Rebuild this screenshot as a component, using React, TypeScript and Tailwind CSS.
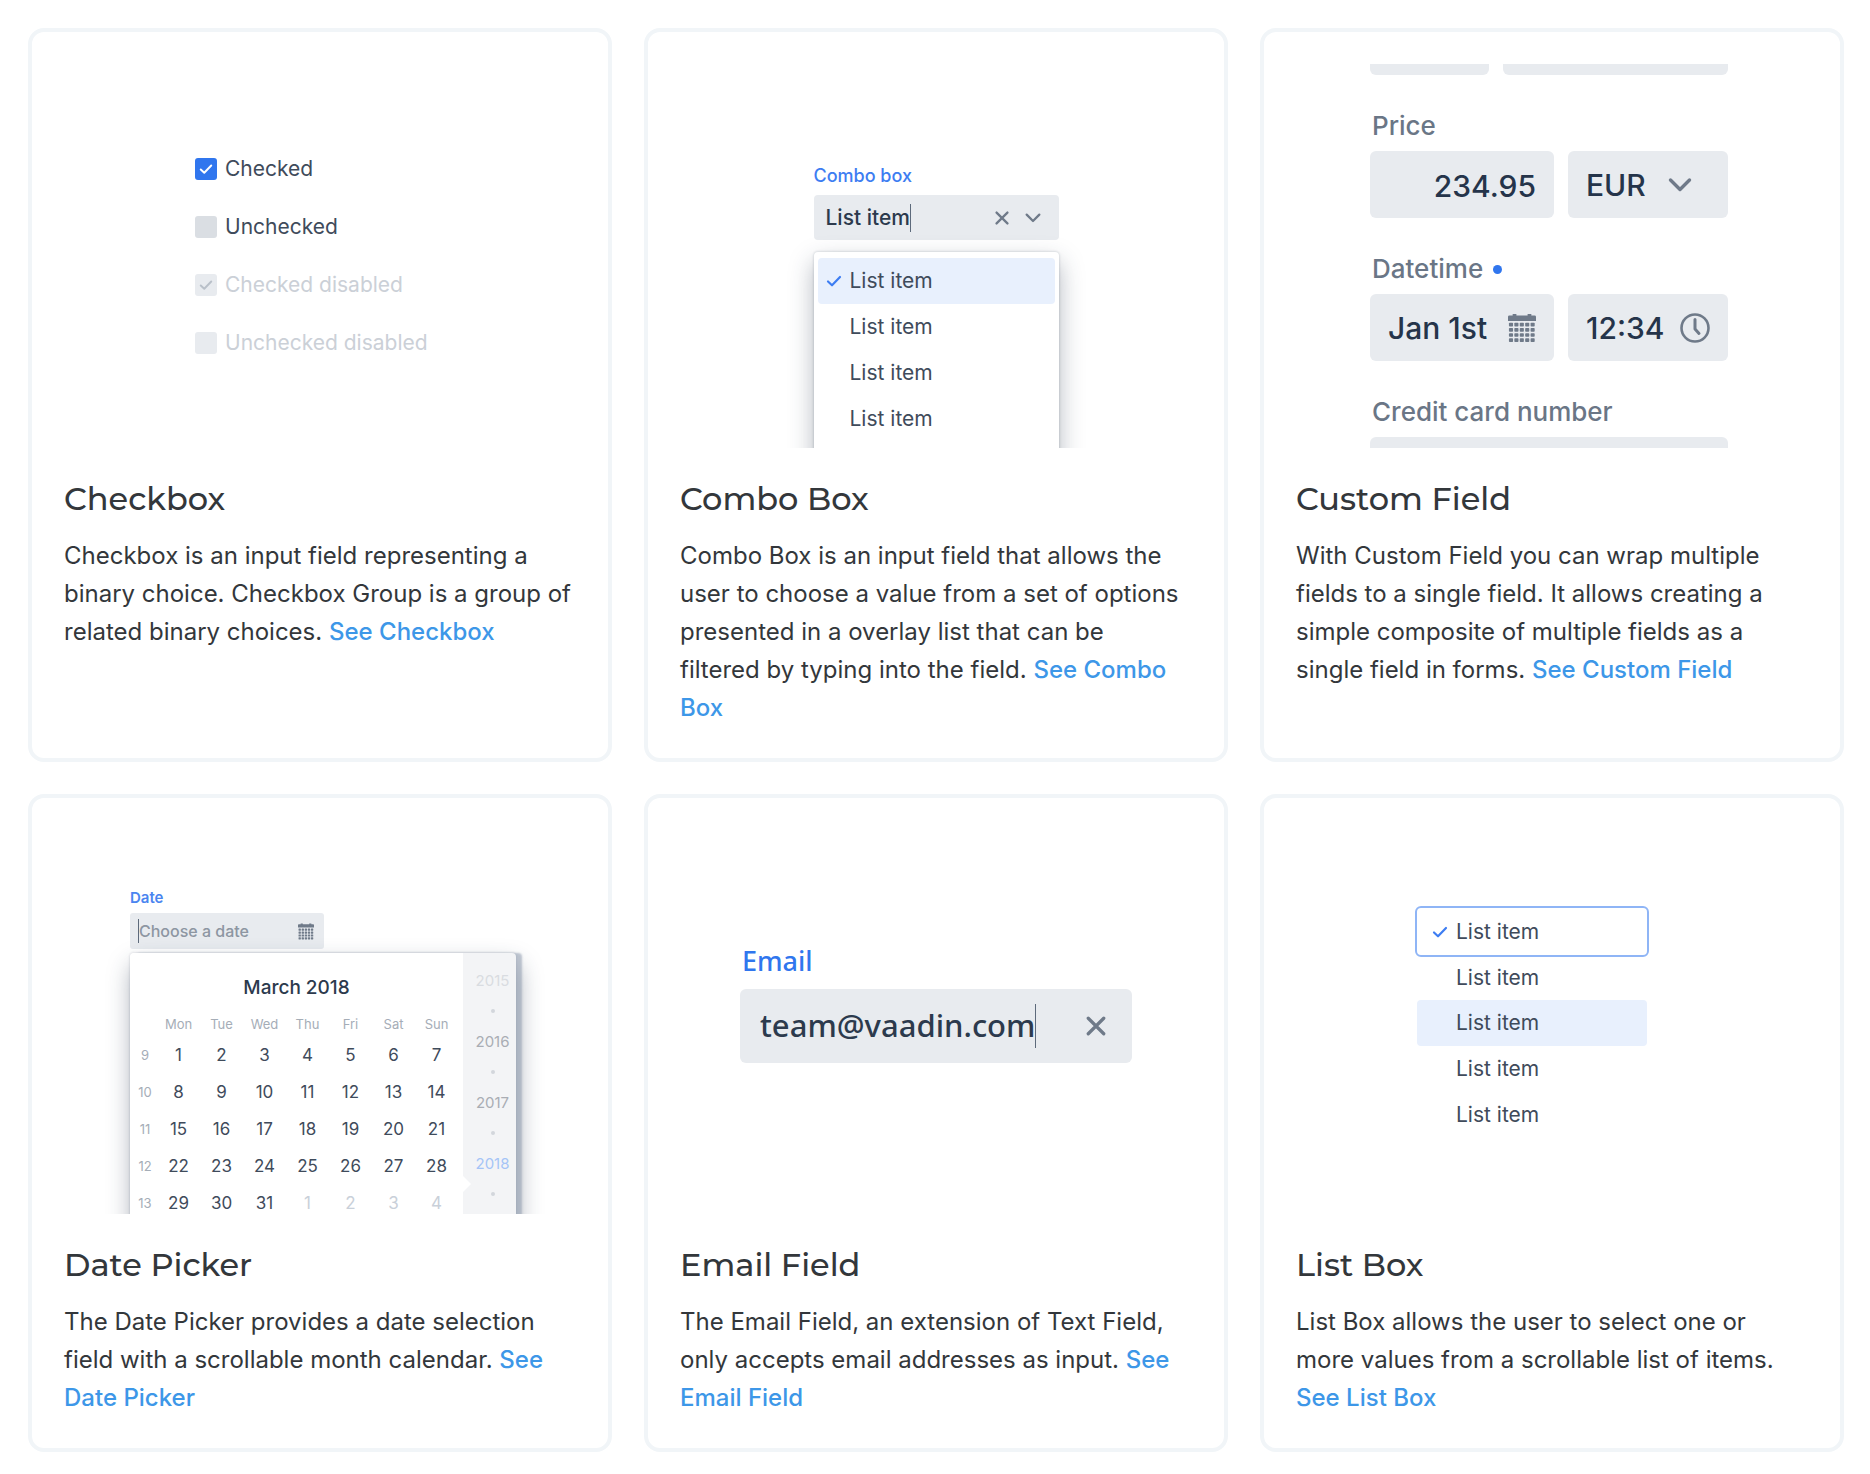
import React from 'react';

interface IconProps {
  className?: string;
}

const CheckIcon: React.FC<IconProps> = ({ className }) => (
  <svg viewBox="0 0 16 16" fill="none" stroke="currentColor" strokeWidth="2.2" strokeLinecap="round" strokeLinejoin="round" className={className} aria-hidden="true">
    <path d="M2 8.500 6 12.300 14 4" />
  </svg>
);

const CrossIcon: React.FC<IconProps> = ({ className }) => (
  <svg viewBox="0 0 16 16" fill="none" stroke="currentColor" strokeWidth="2.6" strokeLinecap="round" className={className} aria-hidden="true">
    <path d="M1.800 1.800 14.200 14.200M14.200 1.800 1.800 14.200" />
  </svg>
);

const ChevronIcon: React.FC<IconProps> = ({ className }) => (
  <svg viewBox="0 0 24 16" fill="none" stroke="currentColor" strokeWidth="3.4" strokeLinecap="round" strokeLinejoin="round" className={className} aria-hidden="true">
    <path d="M2.500 3 12 12.500 21.500 3" />
  </svg>
);

const ClockIcon: React.FC<IconProps> = ({ className }) => (
  <svg viewBox="0 0 30 30" fill="none" stroke="currentColor" strokeLinecap="round" strokeLinejoin="round" className={className} aria-hidden="true">
    <circle cx="15" cy="15" r="13.5" strokeWidth="2.6" />
    <path d="M15 6.500v9.500l4 4.500" strokeWidth="3" />
  </svg>
);

const CalendarIcon: React.FC<IconProps> = ({ className }) => (
  <svg viewBox="0 0 30 30" fill="currentColor" className={className} aria-hidden="true">
    <path d="M1.500 1.500H5V0h4v1.500h12V0h4v1.500h3.500a1.500 1.500 0 0 1 1.500 1.500V7.500H0V3a1.500 1.500 0 0 1 1.500-1.500Z" />
    {[9.5, 15, 20.5, 26].map((y) =>
      [1, 6.8, 12.6, 18.4, 24.2].map((x) => <rect key={`${x}-${y}`} x={x} y={y} width="4.4" height="4" rx="0.8" />)
    )}
  </svg>
);

const checkboxes = [
  { id: 'cb-checked', label: 'Checked', checked: true, disabled: false },
  { id: 'cb-unchecked', label: 'Unchecked', checked: false, disabled: false },
  { id: 'cb-checked-disabled', label: 'Checked disabled', checked: true, disabled: true },
  { id: 'cb-unchecked-disabled', label: 'Unchecked disabled', checked: false, disabled: true },
];

const CheckboxPreview = () => (
  <div className="flex h-full w-[250px] flex-col justify-center gap-9">
    {checkboxes.map((c) => (
      <div key={c.id} className="flex h-[22px] items-center gap-2">
        <span className="relative block size-[22px]">
          <input
            id={c.id}
            type="checkbox"
            defaultChecked={c.checked}
            disabled={c.disabled}
            className="peer block size-[22px] appearance-none rounded-[3px] bg-[#dadee3] checked:bg-[#3076ee] disabled:bg-[#e8ebef]"
          />
          <CheckIcon className="pointer-events-none absolute inset-1 hidden size-3.5 text-white peer-checked:block peer-disabled:text-[#b9c0c9]" />
        </span>
        <label htmlFor={c.id} className={c.disabled ? 'text-[21px] text-[#cbd0d7]' : 'text-[21px] text-[#3f4b5b]'}>
          {c.label}
        </label>
      </div>
    ))}
  </div>
);

const ComboBoxPreview = () => (
  <div className="w-[245px] pt-24">
    <label htmlFor="combo" className="block h-[35px] pt-1 text-lg leading-6 font-medium text-[#3d7df2]">
      Combo box
    </label>
    <div className="flex h-[45px] items-center rounded bg-[#e8ebef] pr-[18px] pl-3">
      <input id="combo" defaultValue="List item" className="field-sizing-content bg-transparent text-[21px] font-medium text-[#2c3a4d] outline-none" />
      <span className="h-7 w-px bg-[#5d6a7b]" />
      <button aria-label="Clear" className="ml-auto text-[#6f7a89]">
        <CrossIcon className="size-3.5" />
      </button>
      <button aria-label="Open list" className="ml-4 text-[#6f7a89]">
        <ChevronIcon className="h-3 w-4" />
      </button>
    </div>
    <ul className="mt-3 h-[300px] rounded bg-white p-1 pt-1.5 shadow-[0_0_2px_1px_rgba(36,51,75,0.12),0_10px_24px_rgba(36,51,75,0.35)]">
      {[0, 1, 2, 3].map((i) => (
        <li key={i} className={i === 0 ? 'flex h-[46px] items-center rounded bg-[#e8f0fd] px-2' : 'flex h-[46px] items-center px-2'}>
          <span className="w-6">{i === 0 && <CheckIcon className="size-4 text-[#3d7df2]" />}</span>
          <span className="text-[21px] text-[#3f4b5b]">List item</span>
        </li>
      ))}
    </ul>
  </div>
);

const CustomFieldPreview = () => (
  <div className="flex w-[364px] flex-col gap-[35px] pr-1.5">
    <div className="flex gap-3.5">
      <div className="h-[11px] w-[119px] rounded-b-md bg-[#e8ebef]" />
      <div className="h-[11px] flex-1 rounded-b-md bg-[#e8ebef]" />
    </div>
    <div className="flex flex-col gap-[9px]">
      <label htmlFor="price" className="pl-0.5 text-[26px] leading-8 font-medium text-[#6a7686]">Price</label>
      <div className="flex gap-3.5 text-[30px] font-medium text-[#25344a]">
        <input id="price" defaultValue="234.95" className="h-[67px] w-[184px] rounded-md bg-[#e8ebef] px-[18px] pt-0.5 text-right outline-none" />
        <div className="relative flex-1">
          <select aria-label="Currency" className="h-[67px] w-full appearance-none rounded-md bg-[#e8ebef] px-[18px] pt-0.5 outline-none">
            <option>EUR</option>
          </select>
          <ChevronIcon className="pointer-events-none absolute top-[26px] right-9 h-4 w-6 text-[#6f7a89]" />
        </div>
      </div>
    </div>
    <div className="flex flex-col gap-[9px]">
      <label htmlFor="date-part" className="flex items-center gap-2.5 pl-0.5 text-[26px] leading-8 font-medium text-[#6a7686]">
        Datetime
        <span className="size-[9px] rounded-full bg-[#3076ee]" />
      </label>
      <div className="flex gap-3.5 text-[30px] font-medium text-[#25344a]">
        <div className="flex h-[67px] w-[184px] items-center rounded-md bg-[#e8ebef] px-[18px]">
          <input id="date-part" defaultValue="Jan 1st" className="min-w-0 flex-1 bg-transparent pt-0.5 outline-none" />
          <CalendarIcon className="h-[30px] w-7 text-[#6f7a89]" />
        </div>
        <div className="flex h-[67px] min-w-0 flex-1 items-center rounded-md bg-[#e8ebef] px-[18px]">
          <input aria-label="Time" defaultValue="12:34" className="min-w-0 flex-1 bg-transparent pt-0.5 outline-none" />
          <ClockIcon className="size-[30px] shrink-0 text-[#6f7a89]" />
        </div>
      </div>
    </div>
    <div className="flex flex-col gap-[9px]">
      <span className="pl-0.5 text-[26px] leading-8 font-medium text-[#6a7686]">Credit card number</span>
      <div className="h-[11px] rounded-t-md bg-[#e8ebef]" />
    </div>
  </div>
);

const weekdays = ['Mon', 'Tue', 'Wed', 'Thu', 'Fri', 'Sat', 'Sun'];
const weeks = [
  { no: 9, days: [1, 2, 3, 4, 5, 6, 7] },
  { no: 10, days: [8, 9, 10, 11, 12, 13, 14] },
  { no: 11, days: [15, 16, 17, 18, 19, 20, 21] },
  { no: 12, days: [22, 23, 24, 25, 26, 27, 28] },
  { no: 13, days: [29, 30, 31, 1, 2, 3, 4] },
];
const years = [
  { year: 2015, color: 'text-[#d9dce1]' },
  { year: 2016, color: 'text-[#a9adb4]' },
  { year: 2017, color: 'text-[#a9adb4]' },
  { year: 2018, color: 'text-[#a5c4f7]' },
];

const DatePickerPreview = () => (
  <div className="w-[380px] pt-14">
    <label htmlFor="date" className="block h-[27px] text-[15px] leading-6 font-semibold text-[#4a85f0]">
      Date
    </label>
    <div className="flex h-9 w-[194px] items-center rounded-[3px] bg-[#e8ebef] pr-2.5 pl-2">
      <span className="h-6 w-px bg-[#5d6a7b]" />
      <input id="date" placeholder="Choose a date" className="min-w-0 flex-1 bg-transparent text-base font-medium outline-none placeholder:text-[#8d96a2]" />
      <CalendarIcon className="h-[17px] w-4 text-[#6f7a89]" />
    </div>
    <div className="mt-1 flex h-[320px] w-[386px] rounded bg-[#f3f4f6] shadow-[6px_0_2px_rgba(148,160,178,0.6),0_0_2px_1px_rgba(36,51,75,0.1),2px_12px_24px_rgba(36,51,75,0.4)]">
      <div className="w-[333px] rounded-l bg-white pt-[23px]">
        <h3 className="text-center text-[19px] leading-6 font-medium text-[#2c3a4d]">March 2018</h3>
        <table className="mt-3 ml-[3px] table-fixed text-center">
          <thead>
            <tr className="h-[25px] text-[13px] text-[#a5adb7]">
              <th className="w-6" />
              {weekdays.map((d) => (
                <th key={d} className="w-[43px] font-normal">{d}</th>
              ))}
            </tr>
          </thead>
          <tbody>
            {weeks.map((w) => (
              <tr key={w.no} className="h-[37px] text-[17px] text-[#3f4b5b]">
                <td className="text-[13px] text-[#a5adb7]">{w.no}</td>
                {w.days.map((d) => (
                  <td key={d} className={w.no === 13 && d < 7 ? 'text-[#c9d0d9]' : ''}>{d}</td>
                ))}
              </tr>
            ))}
          </tbody>
        </table>
      </div>
      <div className="relative flex flex-1 flex-col items-center pt-4 pl-1.5">
        <span className="absolute top-[223px] left-0 border-y-8 border-l-8 border-y-transparent border-l-white" />
        {years.map((y) => (
          <React.Fragment key={y.year}>
            <button className={`${y.color} h-[23px] text-[15px] leading-[23px]`}>{y.year}</button>
            <span className="my-[17px] size-1 shrink-0 rounded-full bg-[#d3d6dc]" />
          </React.Fragment>
        ))}
      </div>
    </div>
  </div>
);

const EmailPreview = () => (
  <div className="flex h-full w-[392px] flex-col justify-center font-['Noto_Sans','Open_Sans',sans-serif]">
    <label htmlFor="email" className="pl-0.5 text-[27px] leading-10 font-medium text-[#3076ee]">Email</label>
    <div className="mt-2 mb-[41px] flex h-[74px] items-center rounded-md bg-[#e8ebef] pr-[26px] pl-5">
      <input id="email" type="email" defaultValue="team@vaadin.com" className="field-sizing-content bg-transparent text-[31px] font-medium text-[#2c3a4d] outline-none" />
      <span className="h-11 w-px bg-[#5d6a7b]" />
      <button aria-label="Clear" className="ml-auto text-[#6f7a89]">
        <CrossIcon className="size-5" />
      </button>
    </div>
  </div>
);

const ListBoxPreview = () => (
  <div className="w-[274px] pt-[76px]">
    <ul className="w-[234px] text-[21px] text-[#3f4b5b]">
      <li className="flex h-[51px] items-center rounded-md border-2 border-[#8fb5f6] pl-[15px]">
        <span className="w-6"><CheckIcon className="size-4 text-[#3d7df2]" /></span>
        List item
      </li>
      <li className="flex h-[43px] items-center pb-0.5 pl-[41px]">List item</li>
      <li className="mx-0.5 flex h-[46px] items-center rounded bg-[#e8f0fd] pl-[39px]">List item</li>
      <li className="flex h-[46px] items-center pl-[41px]">List item</li>
      <li className="flex h-[46px] items-center pl-[41px]">List item</li>
    </ul>
  </div>
);

interface CardProps {
  title: string;
  text: string;
  link: string;
  children: React.ReactNode;
}

const Card: React.FC<CardProps> = ({ title, text, link, children }) => (
  <article className="rounded-2xl border-4 border-[#f1f5f8] px-8 pt-8 pb-[31px]">
    <div className="flex h-96 justify-center overflow-hidden">{children}</div>
    <h2 className="mt-8 mb-[19px] font-[Montserrat,Inter,sans-serif] text-[32px] leading-[38px] font-medium text-[#33373b]">{title}</h2>
    <p className="pr-1 text-2xl leading-[38px] text-[#33373b]">
      {text}{' '}
      <a href="#" className="font-medium text-[#3d97e8]">{link}</a>
    </p>
  </article>
);

export default function App() {
  return (
    <main className="grid grid-cols-3 gap-8 bg-white py-7 pr-[26px] pl-7 font-[Inter,sans-serif]">
      <Card title="Checkbox" text="Checkbox is an input field representing a binary choice. Checkbox Group is a group of related binary choices." link="See Checkbox">
        <CheckboxPreview />
      </Card>
      <Card title="Combo Box" text="Combo Box is an input field that allows the user to choose a value from a set of options presented in a overlay list that can be filtered by typing into the field." link="See Combo Box">
        <ComboBoxPreview />
      </Card>
      <Card title="Custom Field" text="With Custom Field you can wrap multiple fields to a single field. It allows creating a simple composite of multiple fields as a single field in forms." link="See Custom Field">
        <CustomFieldPreview />
      </Card>
      <Card title="Date Picker" text="The Date Picker provides a date selection field with a scrollable month calendar." link="See Date Picker">
        <DatePickerPreview />
      </Card>
      <Card title="Email Field" text="The Email Field, an extension of Text Field, only accepts email addresses as input." link="See Email Field">
        <EmailPreview />
      </Card>
      <Card title="List Box" text="List Box allows the user to select one or more values from a scrollable list of items." link="See List Box">
        <ListBoxPreview />
      </Card>
    </main>
  );
}
